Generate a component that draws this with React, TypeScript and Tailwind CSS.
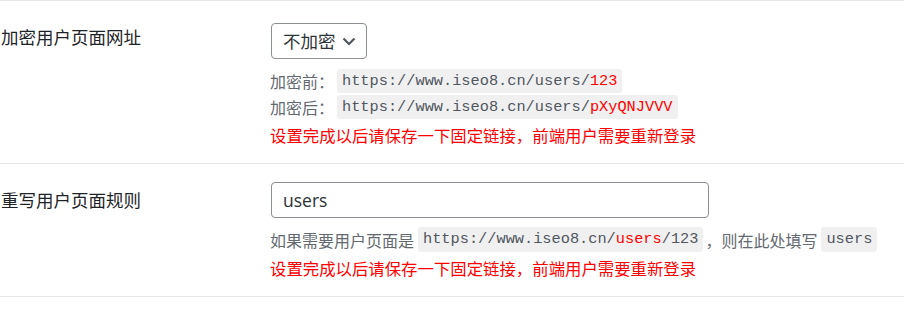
const cjk = "font-['Segoe_UI','Noto_Sans_CJK_SC',sans-serif]";
const mono = "font-['Liberation_Mono','Noto_Sans_CJK_SC',monospace]";

const Code = ({ children }: { children: React.ReactNode }) => (
  <span
    className={`${mono} h-full flex items-center px-[5px] bg-[#f0f0f1] rounded-[3px] text-[15.3px] text-[#50575e]`}
  >
    {children}
  </span>
);

const Notice = () => (
  <div className={`${cjk} h-[24px] mt-[4px] flex items-center text-[16.4px] text-[#ff0000]`}>
    设置完成以后请保存一下固定链接，前端用户需要重新登录
  </div>
);

const App = () => {
  return (
    <div className={`w-[904px] h-[314px] bg-white ${cjk}`}>
      <section className="flex border-t border-[#e8e8e8]">
        <div className="w-[270px] shrink-0 pt-[24px] pl-[1px] leading-[24px] text-[17.5px] text-[#1d2327]">
          加密用户页面网址
        </div>
        <div className="flex flex-col pt-[22px] pb-[16px]">
          <button className="ml-[1px] w-[96px] h-[36px] flex items-center justify-between pl-[11px] pr-[10px] border border-[#8c8f94] rounded-[4px] text-[17.5px] text-[#2c3338]">
            <span>不加密</span>
            <svg width="14" height="9" viewBox="0 0 14 9" className="mt-[1px]">
              <polyline
                points="1.5,1.5 7,7 12.5,1.5"
                fill="none"
                stroke="#50575e"
                strokeWidth="2.2"
              />
            </svg>
          </button>
          <div className="h-[24px] mt-[10px] flex items-center text-[16px] text-[#646970]">
            <span className="mr-[3px]">加密前：</span>
            <Code>
              https://www.iseo8.cn/users/<span className="text-[#ff0000]">123</span>
            </Code>
          </div>
          <div className="h-[24px] mt-[2px] flex items-center text-[16px] text-[#646970]">
            <span className="mr-[3px]">加密后：</span>
            <Code>
              https://www.iseo8.cn/users/<span className="text-[#ff0000]">pXyQNJVVV</span>
            </Code>
          </div>
          <Notice />
        </div>
      </section>
      <section className="flex border-t border-b border-[#e8e8e8]">
        <div className="w-[270px] shrink-0 pt-[24px] pl-[1px] leading-[24px] text-[17.5px] text-[#1d2327]">
          重写用户页面规则
        </div>
        <div className="flex flex-col pt-[18px] pb-[16px]">
          <input
            type="text"
            defaultValue="users"
            className="ml-[1px] w-[438px] h-[36px] px-[11px] border border-[#8c8f94] rounded-[4px] text-[17.5px] text-[#2c3338] font-['Open_Sans',sans-serif] outline-none"
          />
          <div className="h-[25px] mt-[9px] flex items-center text-[16px] text-[#646970] whitespace-nowrap">
            <span className="mr-[4px]">如果需要用户页面是</span>
            <Code>
              https://www.iseo8.cn/<span className="text-[#ff0000]">users</span>/123
            </Code>
            <span className="ml-[2px] mr-[4px]">，则在此处填写</span>
            <Code>users</Code>
          </div>
          <Notice />
        </div>
      </section>
    </div>
  );
};
export default App;
